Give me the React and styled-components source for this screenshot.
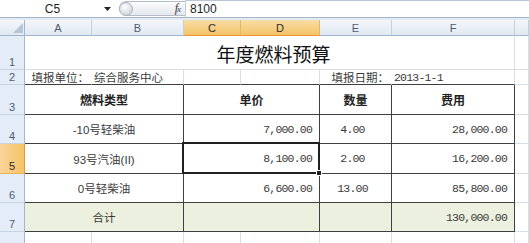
import React from 'react';
import styled, { createGlobalStyle } from 'styled-components';

const GlobalStyle = createGlobalStyle`
  html, body {
    margin: 0;
    padding: 0;
  }
  body {
    width: 529px;
    height: 243px;
    overflow: hidden;
    background: #e4eaf2;
    font-family: "Liberation Sans", "Noto Sans CJK SC", sans-serif;
  }
  * {
    box-sizing: border-box;
  }
`;

const Window = styled.div`
  width: 529px;
  height: 243px;
  overflow: hidden;
  display: flex;
  flex-direction: column;
`;

// Formula bar across the top
const FormulaBar = styled.div`
  display: flex;
  align-items: stretch;
  height: 18px;
  background: #fff;
  border-bottom: 1px solid #a3b6cc;
  margin-bottom: 2px;
  flex-shrink: 0;
`;

const NameBox = styled.div`
  width: 117px;
  display: flex;
  align-items: center;
  font-size: 12px;
  color: #1e1e1e;
`;

const NameText = styled.span`
  flex: 1;
  text-align: center;
  padding-left: 1px;
`;

const DropArrow = styled.span`
  width: 13px;
  display: flex;
  align-items: center;
  justify-content: flex-start;
`;

const FxPill = styled.div`
  width: 66px;
  margin: 1px 0 1px 2px;
  display: flex;
  align-items: center;
  justify-content: space-between;
  border: 1px solid #b3bcc8;
  border-right: none;
  border-radius: 8px 0 0 8px;
  background: linear-gradient(#fbfcfd, #e3e7ec);
  padding: 0 5px 0 0;
`;

const Knob = styled.span`
  width: 14px;
  height: 14px;
  margin-left: -1px;
  border-radius: 50%;
  border: 1px solid #aab4c2;
  background: radial-gradient(circle at 40% 35%, #ffffff, #d3d9e1 70%, #c3cad4);
`;

const FxLabel = styled.span`
  font-family: "Liberation Serif", serif;
  font-style: italic;
  font-size: 12px;
  color: #3a3a3a;
  letter-spacing: -1px;

  & small {
    font-size: 9px;
  }
`;

const FormulaInput = styled.div`
  flex: 1;
  display: flex;
  align-items: center;
  padding-left: 4px;
  border-left: 1px solid #c3cedb;
  border-top: 1px solid #b9c6d6;
  font-size: 12px;
  color: #1e1e1e;
`;

// The sheet grid
const Sheet = styled.div`
  display: grid;
  grid-template-columns: 25px 67px 92px 57px 79px 72px 123px 14px;
  grid-template-rows: 16px 34px 15px 30px 29px 30px 29px 29px 29px;
  background: #fff;
  flex: 1;
  overflow: hidden;
`;

const Corner = styled.div`
  background: linear-gradient(#f4f7fb, #e1e8f1);
  border-right: 1px solid #9eb6ce;
  border-bottom: 1px solid #9eb6ce;
  display: flex;
  align-items: flex-end;
  justify-content: flex-end;
  padding: 0 1px 2px 0;
`;

const ColHead = styled.div`
  display: flex;
  align-items: center;
  justify-content: center;
  font-size: 11px;
  color: ${p => (p.$active ? '#2b2b2b' : '#4d5c70')};
  background: ${p =>
    p.$active
      ? 'linear-gradient(#f9dca6, #f3c468)'
      : 'linear-gradient(#f4f7fb, #e1e8f1)'};
  border-right: 1px solid ${p => (p.$active ? '#e8b55a' : '#c3cfdd')};
  border-bottom: 1px solid ${p => (p.$active ? '#f29436' : '#9eb6ce')};
`;

const RowHead = styled.div`
  display: flex;
  align-items: flex-end;
  justify-content: center;
  padding-bottom: 1px;
  font-size: 11px;
  color: ${p => (p.$active ? '#2b2b2b' : '#4d5c70')};
  background: ${p => (p.$active ? 'linear-gradient(90deg, #f9d59a, #f5c366)' : '#e4ecf7')};
  border-right: 1px solid ${p => (p.$active ? '#f29436' : '#9eb6ce')};
  border-bottom: 1px solid ${p => (p.$active ? '#e8b55a' : '#c5d2e1')};
`;

const Cell = styled.div`
  grid-column: span ${p => p.$span || 1};
  position: relative;
  display: flex;
  align-items: center;
  justify-content: ${p =>
    p.$align === 'right' ? 'flex-end' : p.$align === 'left' ? 'flex-start' : 'center'};
  padding: ${p => p.$pad || '0 2px'};
  font-size: 11.5px;
  color: #3a3a3a;
  white-space: nowrap;
  background: ${p => p.$bg || 'transparent'};
  border-right: 1px solid ${p => (p.$table ? '#3f3f3f' : p.$noRight ? 'transparent' : '#d8dee8')};
  border-bottom: 1px solid ${p => (p.$table || p.$topEdge ? '#3f3f3f' : '#d8dee8')};
`;

const Title = styled(Cell)`
  font-size: 19px;
  font-weight: 400;
  color: #111;
  padding-left: 10px;
  padding-top: 2px;
`;

const HeadText = styled.span`
  font-weight: 700;
  font-size: 12px;
  color: #222;
`;

const Num = styled.span`
  font-family: "Liberation Mono", monospace;
  font-size: 11.5px;
  letter-spacing: -0.8px;
  color: #3a3a3a;
`;

const Selection = styled.div`
  position: absolute;
  top: -2px;
  left: -2px;
  right: -1px;
  bottom: -1px;
  border: 2px solid #202020;
  pointer-events: none;
  z-index: 2;
`;

const FillHandle = styled.div`
  position: absolute;
  right: -4px;
  bottom: -4px;
  width: 6px;
  height: 6px;
  background: #202020;
  border: 1px solid #fff;
  z-index: 3;
`;

const columns = ['A', 'B', 'C', 'D', 'E', 'F', ''];
const activeCols = ['C', 'D'];

const rows = [
  { n: 4, type: '-10号轻柴油', price: '7,000.00', qty: '4.00', cost: '28,000.00' },
  { n: 5, type: '93号汽油(II)', price: '8,100.00', qty: '2.00', cost: '16,200.00', selected: true },
  { n: 6, type: '0号轻柴油', price: '6,600.00', qty: '13.00', cost: '85,800.00' },
];

const GREEN = '#ebf1de';

export default function App() {
  return (
    <Window>
      <GlobalStyle />
      <FormulaBar>
        <NameBox>
          <NameText>C5</NameText>
          <DropArrow>
            <svg width="7" height="4" viewBox="0 0 7 4">
              <path d="M0 0 L7 0 L3.5 4 Z" fill="#222" />
            </svg>
          </DropArrow>
        </NameBox>
        <FxPill>
          <Knob />
          <FxLabel>
            f<small>x</small>
          </FxLabel>
        </FxPill>
        <FormulaInput>8100</FormulaInput>
      </FormulaBar>

      <Sheet>
        <Corner>
          <svg width="10" height="10" viewBox="0 0 10 10">
            <polygon points="10,0 10,10 0,10" fill="#b5c5d8" />
          </svg>
        </Corner>
        {columns.map((c, i) => (
          <ColHead key={i} $active={activeCols.includes(c)}>
            {c}
          </ColHead>
        ))}

        {/* row 1 */}
        <RowHead>1</RowHead>
        <Title $span={6}>年度燃料预算</Title>
        <Cell />

        {/* row 2 */}
        <RowHead>2</RowHead>
        <Cell $align="right" $topEdge $noRight>填报单位：</Cell>
        <Cell $align="left" $topEdge>综合服务中心</Cell>
        <Cell $topEdge />
        <Cell $topEdge />
        <Cell $align="right" $topEdge $noRight>填报日期：</Cell>
        <Cell $align="left" $topEdge>
          <Num>2013-1-1</Num>
        </Cell>
        <Cell />

        {/* row 3: table header */}
        <RowHead>3</RowHead>
        <Cell $span={2} $table>
          <HeadText>燃料类型</HeadText>
        </Cell>
        <Cell $span={2} $table>
          <HeadText>单价</HeadText>
        </Cell>
        <Cell $table>
          <HeadText>数量</HeadText>
        </Cell>
        <Cell $table>
          <HeadText>费用</HeadText>
        </Cell>
        <Cell />

        {rows.map(r => (
          <React.Fragment key={r.n}>
            <RowHead $active={r.selected}>{r.n}</RowHead>
            <Cell $span={2} $table>{r.type}</Cell>
            <Cell $span={2} $table $align="right" $pad="0 7px 0 2px">
              <Num>{r.price}</Num>
              {r.selected && (
                <Selection>
                  <FillHandle />
                </Selection>
              )}
            </Cell>
            <Cell $table $pad="0 6px 0 0">
              <Num>{r.qty}</Num>
            </Cell>
            <Cell $table $align="right" $pad="0 7px 0 2px">
              <Num>{r.cost}</Num>
            </Cell>
            <Cell />
          </React.Fragment>
        ))}

        {/* row 7: total */}
        <RowHead>7</RowHead>
        <Cell $span={2} $table $bg={GREEN}>合计</Cell>
        <Cell $span={2} $table $bg={GREEN} />
        <Cell $table $bg={GREEN} />
        <Cell $table $bg={GREEN} $align="right" $pad="0 7px 0 2px">
          <Num>130,000.00</Num>
        </Cell>
        <Cell />

        {/* row 8 */}
        <RowHead>8</RowHead>
        {columns.map((c, i) => (
          <Cell key={i} />
        ))}
      </Sheet>
    </Window>
  );
}
